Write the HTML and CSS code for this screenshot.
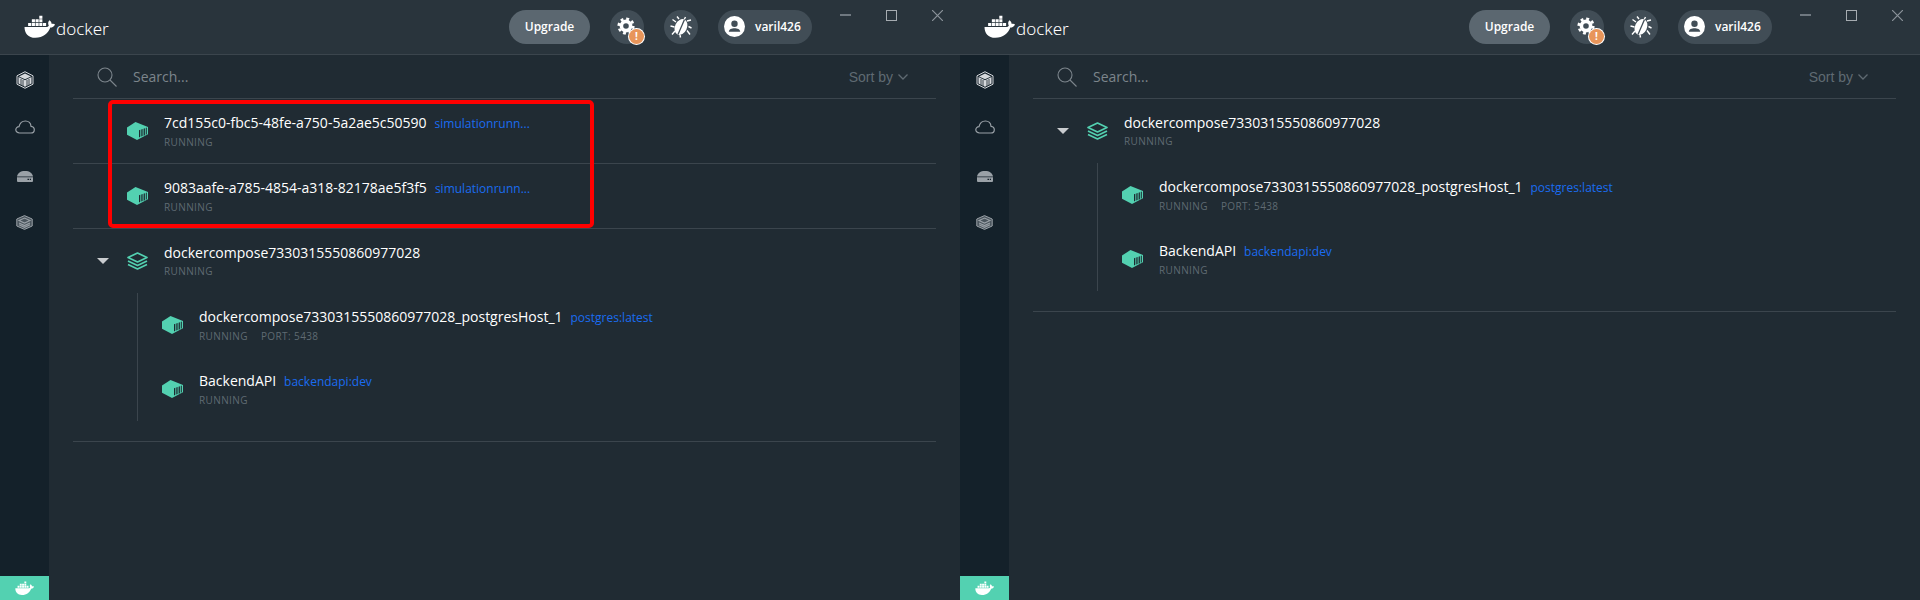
FILE: index.html
```html
<!DOCTYPE html>
<html lang="en">
<head>
    <meta charset="UTF-8" />
    <title>Docker</title>
    <link rel="stylesheet" href="styles.css">
</head>
<body>

    <svg class="defs" width="0" height="0">
        <symbol id="whale" viewBox="0 0 30 22">
            <path d="M4 7.6h3v2.9H4zM7.6 7.6h3v2.9h-3zM11.2 7.6h3v2.9h-3zM14.8 7.6h3v2.9h-3zM18.4 7.6h3v2.9h-3zM7.6 4.1h3V7h-3zM11.2 4.1h3V7h-3zM14.8 4.1h3V7h-3zM14.8.6h3v2.9h-3z"/>
            <path d="M.5 11.5h21c1 0 2-.4 2.5-1.5-1-1.5-.7-3.5.5-5 1.500 1 2.300 2.500 2.300 3.600 1.200-.4 2.500-.2 3.200.4-.7 2-2.500 3-4.500 3C23.500 17.500 18.500 22 11 22 4 22 .5 17.500 .5 11.500z"/>
        </symbol>
        <symbol id="box" viewBox="0 0 21 18">
            <path fill="#53d1b1" d="M0 5.500 8.500 0 21 5v7.200L10 18 0 12.800z"/>
            <path fill="#1d2a31" d="M12 8.300l1.300-.5v7l-1.300.6zM14.300 7.500l1.300-.5v7l-1.300.6zM16.600 6.800l1.300-.5v6.900l-1.300.6zM18.800 6l1-.4v6.700l-1 .5z"/>
        </symbol>
        <symbol id="stack" viewBox="0 0 21 18">
            <g fill="none" stroke="#53d1b1" stroke-width="1.700" stroke-linejoin="round">
                <path d="M10.500 1 20 5.500 10.500 10 1 5.500z"/>
                <path d="M1 9l9.500 4.500L20 9"/>
                <path d="M1 12.500 10.500 17l9.500-4.500"/>
            </g>
        </symbol>
    </svg>

    <div class="screens">

        <section class="win">
            <header class="titlebar">
                <div class="logo">
                    <svg class="logo-whale"><use href="#whale"/></svg>
                    <span class="logo-word">docker</span>
                </div>
                <button class="upgrade">Upgrade</button>
                <span class="round">
                    <svg width="22" height="22" viewBox="0 0 22 22" fill="none" stroke="#fff">
                        <circle cx="10" cy="10" r="4.600" stroke-width="3.600"/>
                        <circle cx="10" cy="10" r="7.300" stroke-width="2.600" stroke-dasharray="2.900 2.830"/>
                    </svg>
                    <span class="warn">!</span>
                </span>
                <span class="round">
                    <svg width="22" height="22" viewBox="0 0 22 22" fill="#fff" stroke="#fff">
                        <g stroke-width="1.400" fill="none">
                            <path d="M9 3 7 .5M14 4 15.500 1M6 6 2.500 3.500M4.500 11 .5 10M5 15 2 18.500M17 5 21 4M18.500 10.500 21.500 12M17 14.500 20 18.500M10 19 10.500 21.500"/>
                        </g>
                        <ellipse cx="11" cy="11" rx="6" ry="8.200" transform="rotate(25 11 11)" stroke="none"/>
                        <path d="M14.500 3.500 8 18.500" stroke="#414d56" stroke-width="1.300"/>
                    </svg>
                </span>
                <span class="user">
                    <svg width="21" height="21" viewBox="0 0 21 21">
                        <circle cx="10.500" cy="10.500" r="10.500" fill="#fff"/>
                        <circle cx="10.500" cy="7.800" r="3.200" fill="#414d56"/>
                        <path d="M4.800 15.800c0-2.400 3-3.500 5.700-3.500s5.700 1.100 5.700 3.500z" fill="#414d56"/>
                    </svg>
                    <span>varil426</span>
                </span>
                <div class="winctl">
                    <span class="ctl-min"></span>
                    <span class="ctl-max"></span>
                    <svg class="ctl-close" width="11" height="11" viewBox="0 0 11 11" stroke="#8b939a" stroke-width="1.200"><path d="M0 0l11 11M11 0 0 11"/></svg>
                </div>
            </header>

            <div class="body">
                <nav class="side">
                    <div class="side-icons">
                        <svg width="18" height="18" viewBox="0 0 18 18" fill="none" stroke="#d5d8db"><path d="M9 .7 17 4.800v8.400L9 17.300 1 13.200V4.800z"/><path d="M2.500 6 9 9.300 15.500 6v6.500L9 15.800l-6.500-3.300z" fill="#d5d8db" stroke="none"/><path d="M9 2.500 15 5.500 9 8.300 3 5.500z" fill="#d5d8db" stroke="none"/><path d="M5 8v6M7 9v6M11 9v6M13 8v6" stroke="#14212a" stroke-width=".8"/></svg>
                        <svg width="20" height="14" viewBox="0 0 20 14" fill="none" stroke="#9aa1a7" stroke-width="1.200"><path d="M5 13H4.500C2.500 13 .8 11.500 .8 9.800c0-1.800 1.400-3.100 3.200-3.100C4.800 3.200 7.500 1 10.500 1c3.100 0 5.300 2.300 5.500 5.300 1.900.2 3.300 1.600 3.300 3.400 0 1.800-1.500 3.300-3.500 3.300z"/></svg>
                        <svg width="16" height="11" viewBox="0 0 16 11"><path d="M0 5.500C.6 2 3.500 0 8 0s7.400 2 8 5.500z" fill="#9aa1a7"/><path d="M0 6.300h16V10a1 1 0 0 1-1 1H1a1 1 0 0 1-1-1z" fill="#9aa1a7"/><path d="M10.500 7.800h1.500v1.300h-1.500zM12.800 7.800h1.200v1.300h-1.200z" fill="#14212a"/></svg>
                        <svg width="17" height="15" viewBox="0 0 17 15" fill="#4a555d" stroke="#9aa1a7"><path d="M8.500.6 16.200 4v7L8.500 14.400.8 11V4z"/><path d="M3 5.500 8.500 3l5.500 2.500-5.500 2.600zM3 8l5.500 2.600L14 8M3 9.800l5.500 2.500 5.500-2.500" fill="none" stroke-width="1.100"/></svg>
                    </div>
                    <div class="side-whale"><svg width="19" height="14"><use href="#whale"/></svg></div>
                </nav>

                <main class="main">
                    <div class="search">
                        <svg width="20" height="20" viewBox="0 0 20 20" fill="none" stroke="#7c858c" stroke-width="1.100"><circle cx="8" cy="8" r="7"/><path d="M13 13l6.500 6.500"/></svg>
                        <span class="search-text">Search...</span>
                        <span class="sort">Sort by
                            <svg width="10" height="6" viewBox="0 0 10 6" fill="none" stroke="#5f6a72" stroke-width="1.300"><path d="M.5.500 5 5 9.500.500"/></svg>
                        </span>
                    </div>
                    <div class="row">
                        <svg class="ico"><use href="#box"/></svg>
                        <div>
                            <div class="name">7cd155c0-fbc5-48fe-a750-5a2ae5c50590<a class="tag">simulationrunn...</a></div>
                            <div class="meta">RUNNING</div>
                        </div>
                    </div>
                    <div class="row">
                        <svg class="ico"><use href="#box"/></svg>
                        <div>
                            <div class="name">9083aafe-a785-4854-a318-82178ae5f3f5<a class="tag">simulationrunn...</a></div>
                            <div class="meta">RUNNING</div>
                        </div>
                    </div>
                    <div class="group">
                        <div class="group-head">
                            <span class="caret"></span>
                            <svg class="ico"><use href="#stack"/></svg>
                            <div>
                                <div class="name">dockercompose7330315550860977028</div>
                                <div class="meta">RUNNING</div>
                            </div>
                        </div>
                        <div class="children">
                            <div class="child">
                                <svg class="ico"><use href="#box"/></svg>
                                <div>
                                    <div class="name">dockercompose7330315550860977028_postgresHost_1<a class="tag">postgres:latest</a></div>
                                    <div class="meta">RUNNING<span class="port">PORT: 5438</span></div>
                                </div>
                            </div>
                            <div class="child">
                                <svg class="ico"><use href="#box"/></svg>
                                <div>
                                    <div class="name">BackendAPI<a class="tag">backendapi:dev</a></div>
                                    <div class="meta">RUNNING</div>
                                </div>
                            </div>
                        </div>
                    </div>
                    <div class="highlight"></div>
                </main>
            </div>
        </section>

        <section class="win">
            <header class="titlebar">
                <div class="logo">
                    <svg class="logo-whale"><use href="#whale"/></svg>
                    <span class="logo-word">docker</span>
                </div>
                <button class="upgrade">Upgrade</button>
                <span class="round">
                    <svg width="22" height="22" viewBox="0 0 22 22" fill="none" stroke="#fff">
                        <circle cx="10" cy="10" r="4.600" stroke-width="3.600"/>
                        <circle cx="10" cy="10" r="7.300" stroke-width="2.600" stroke-dasharray="2.900 2.830"/>
                    </svg>
                    <span class="warn">!</span>
                </span>
                <span class="round">
                    <svg width="22" height="22" viewBox="0 0 22 22" fill="#fff" stroke="#fff">
                        <g stroke-width="1.400" fill="none">
                            <path d="M9 3 7 .5M14 4 15.500 1M6 6 2.500 3.500M4.500 11 .5 10M5 15 2 18.500M17 5 21 4M18.500 10.500 21.500 12M17 14.500 20 18.500M10 19 10.500 21.500"/>
                        </g>
                        <ellipse cx="11" cy="11" rx="6" ry="8.200" transform="rotate(25 11 11)" stroke="none"/>
                        <path d="M14.500 3.500 8 18.500" stroke="#414d56" stroke-width="1.300"/>
                    </svg>
                </span>
                <span class="user">
                    <svg width="21" height="21" viewBox="0 0 21 21">
                        <circle cx="10.500" cy="10.500" r="10.500" fill="#fff"/>
                        <circle cx="10.500" cy="7.800" r="3.200" fill="#414d56"/>
                        <path d="M4.800 15.800c0-2.400 3-3.500 5.700-3.500s5.700 1.100 5.700 3.500z" fill="#414d56"/>
                    </svg>
                    <span>varil426</span>
                </span>
                <div class="winctl">
                    <span class="ctl-min"></span>
                    <span class="ctl-max"></span>
                    <svg class="ctl-close" width="11" height="11" viewBox="0 0 11 11" stroke="#8b939a" stroke-width="1.200"><path d="M0 0l11 11M11 0 0 11"/></svg>
                </div>
            </header>

            <div class="body">
                <nav class="side">
                    <div class="side-icons">
                        <svg width="18" height="18" viewBox="0 0 18 18" fill="none" stroke="#d5d8db"><path d="M9 .7 17 4.800v8.400L9 17.300 1 13.200V4.800z"/><path d="M2.500 6 9 9.300 15.500 6v6.500L9 15.800l-6.500-3.300z" fill="#d5d8db" stroke="none"/><path d="M9 2.500 15 5.500 9 8.300 3 5.500z" fill="#d5d8db" stroke="none"/><path d="M5 8v6M7 9v6M11 9v6M13 8v6" stroke="#14212a" stroke-width=".8"/></svg>
                        <svg width="20" height="14" viewBox="0 0 20 14" fill="none" stroke="#9aa1a7" stroke-width="1.200"><path d="M5 13H4.500C2.500 13 .8 11.500 .8 9.800c0-1.800 1.400-3.100 3.200-3.100C4.800 3.200 7.500 1 10.500 1c3.100 0 5.300 2.300 5.500 5.300 1.900.2 3.300 1.600 3.300 3.400 0 1.800-1.500 3.300-3.500 3.300z"/></svg>
                        <svg width="16" height="11" viewBox="0 0 16 11"><path d="M0 5.500C.6 2 3.500 0 8 0s7.400 2 8 5.500z" fill="#9aa1a7"/><path d="M0 6.300h16V10a1 1 0 0 1-1 1H1a1 1 0 0 1-1-1z" fill="#9aa1a7"/><path d="M10.500 7.800h1.500v1.300h-1.500zM12.800 7.800h1.200v1.300h-1.200z" fill="#14212a"/></svg>
                        <svg width="17" height="15" viewBox="0 0 17 15" fill="#4a555d" stroke="#9aa1a7"><path d="M8.500.6 16.200 4v7L8.500 14.400.8 11V4z"/><path d="M3 5.500 8.500 3l5.500 2.500-5.500 2.600zM3 8l5.500 2.600L14 8M3 9.800l5.500 2.500 5.500-2.500" fill="none" stroke-width="1.100"/></svg>
                    </div>
                    <div class="side-whale"><svg width="19" height="14"><use href="#whale"/></svg></div>
                </nav>

                <main class="main">
                    <div class="search">
                        <svg width="20" height="20" viewBox="0 0 20 20" fill="none" stroke="#7c858c" stroke-width="1.100"><circle cx="8" cy="8" r="7"/><path d="M13 13l6.500 6.500"/></svg>
                        <span class="search-text">Search...</span>
                        <span class="sort">Sort by
                            <svg width="10" height="6" viewBox="0 0 10 6" fill="none" stroke="#5f6a72" stroke-width="1.300"><path d="M.5.500 5 5 9.500.500"/></svg>
                        </span>
                    </div>
                    <div class="group">
                        <div class="group-head">
                            <span class="caret"></span>
                            <svg class="ico"><use href="#stack"/></svg>
                            <div>
                                <div class="name">dockercompose7330315550860977028</div>
                                <div class="meta">RUNNING</div>
                            </div>
                        </div>
                        <div class="children">
                            <div class="child">
                                <svg class="ico"><use href="#box"/></svg>
                                <div>
                                    <div class="name">dockercompose7330315550860977028_postgresHost_1<a class="tag">postgres:latest</a></div>
                                    <div class="meta">RUNNING<span class="port">PORT: 5438</span></div>
                                </div>
                            </div>
                            <div class="child">
                                <svg class="ico"><use href="#box"/></svg>
                                <div>
                                    <div class="name">BackendAPI<a class="tag">backendapi:dev</a></div>
                                    <div class="meta">RUNNING</div>
                                </div>
                            </div>
                        </div>
                    </div>
                </main>
            </div>
        </section>

    </div>

</body>
</html>
```

FILE: styles.css
```css
* {
    box-sizing: border-box;
}

body {
    margin: 0;
    background-color: #202b33;
    color: #fff;
    font-family: "Open Sans", sans-serif;
    overflow: hidden;
}

.defs {
    display: block;
    height: 0;
}

.screens {
    display: flex;
    height: 600px;
}

.win {
    display: flex;
    flex-direction: column;
    width: 960px;
    height: 600px;
}

.titlebar {
    display: flex;
    align-items: center;
    height: 55px;
    padding: 0 0 1px 24px;
    background-color: #29343c;
    border-bottom: 1px solid #3b454d;
}

.logo {
    display: flex;
    align-items: center;
    margin-right: auto;
    fill: #fff;
}

.logo-whale {
    width: 31px;
    height: 23px;
}

.logo-word {
    margin-left: 1px;
    font-family: "Noto Sans", sans-serif;
    font-size: 17px;
    font-weight: 300;
    line-height: 23px;
    padding-top: 3px;
}

.upgrade {
    width: 81px;
    height: 34px;
    border: 0;
    border-radius: 17px;
    background-color: #5b6770;
    color: #fff;
    font-family: "Open Sans", sans-serif;
    font-size: 12px;
    font-weight: 600;
}

.round {
    position: relative;
    display: flex;
    align-items: center;
    justify-content: center;
    width: 34px;
    height: 34px;
    margin-left: 20px;
    border-radius: 50%;
    background-color: #414d56;
}

.warn {
    position: absolute;
    right: 0;
    bottom: 0;
    width: 15px;
    height: 15px;
    border-radius: 50%;
    background-color: #e8955a;
    box-shadow: 0 0 0 1px #fff;
    color: #fff;
    font-size: 10px;
    font-weight: 700;
    line-height: 15px;
    text-align: center;
}

.user {
    display: flex;
    align-items: center;
    gap: 10px;
    width: 94px;
    height: 34px;
    margin-left: 20px;
    padding-left: 6px;
    border-radius: 17px;
    background-color: #414d56;
    font-size: 12px;
    font-weight: 600;
}

.winctl {
    display: flex;
    align-self: flex-start;
    gap: 35px;
    width: 148px;
    padding: 10px 17px 0 28px;
}

.ctl-min {
    width: 11px;
    height: 2px;
    margin-top: 4px;
    background-color: #6f7880;
}

.ctl-max {
    width: 11px;
    height: 11px;
    border: 1px solid #a6acb1;
}

.ctl-close {
    flex: none;
}

.body {
    display: flex;
    flex: 1;
    min-height: 0;
}

.side {
    display: flex;
    flex-direction: column;
    justify-content: space-between;
    width: 49px;
    background-color: #14212a;
}

.side-icons {
    display: flex;
    flex-direction: column;
    align-items: center;
    padding-top: 16px;
}

.side-icons svg:nth-child(2) {
    margin-top: 31px;
}

.side-icons svg:nth-child(3) {
    margin-top: 37px;
}

.side-icons svg:nth-child(4) {
    margin-top: 33px;
}

.side-whale {
    display: flex;
    align-items: center;
    justify-content: center;
    height: 24px;
    background-color: #53d1b1;
    fill: #fff;
}

.main {
    position: relative;
    flex: 1;
    padding: 0 24px;
}

.search {
    display: flex;
    align-items: center;
    height: 44px;
    padding-left: 24px;
    border-bottom: 1px solid #3b454d;
}

.search-text {
    margin-left: 16px;
    color: #7c858c;
    font-size: 14px;
}

.sort {
    display: flex;
    align-items: center;
    gap: 5px;
    margin-left: auto;
    padding-right: 28px;
    color: #5f6a72;
    font-family: "Liberation Sans", sans-serif;
    font-size: 14px;
}

.row {
    display: flex;
    align-items: center;
    gap: 16px;
    height: 65px;
    padding: 0 0 1px 54px;
    border-bottom: 1px solid #3b454d;
}

.ico {
    flex: none;
    width: 21px;
    height: 18px;
}

.name {
    display: flex;
    align-items: baseline;
    font-size: 14px;
    line-height: 20px;
    white-space: nowrap;
}

.tag {
    margin-left: 8px;
    color: #1a6cf0;
    font-size: 12px;
}

.meta {
    margin-top: 1px;
    color: #5f6a72;
    font-size: 10px;
    letter-spacing: 0.4px;
    line-height: 14px;
}

.port {
    margin-left: 13px;
}

.group {
    padding-bottom: 20px;
    border-bottom: 1px solid #3b454d;
}

.group-head {
    display: flex;
    align-items: center;
    gap: 16px;
    height: 64px;
    padding: 0 0 1px 54px;
}

.caret {
    width: 0;
    height: 0;
    margin-left: -30px;
    margin-right: 2px;
    border-style: solid;
    border-width: 6px 6px 0;
    border-color: #c9cccf transparent transparent;
}

.children {
    margin-left: 64px;
    border-left: 1px solid #3b454d;
}

.child {
    display: flex;
    align-items: center;
    gap: 16px;
    height: 64px;
    padding-left: 24px;
}

.highlight {
    position: absolute;
    top: 45px;
    left: 59px;
    width: 486px;
    height: 128px;
    border: 4px solid #f00;
    border-radius: 5px;
}
```
